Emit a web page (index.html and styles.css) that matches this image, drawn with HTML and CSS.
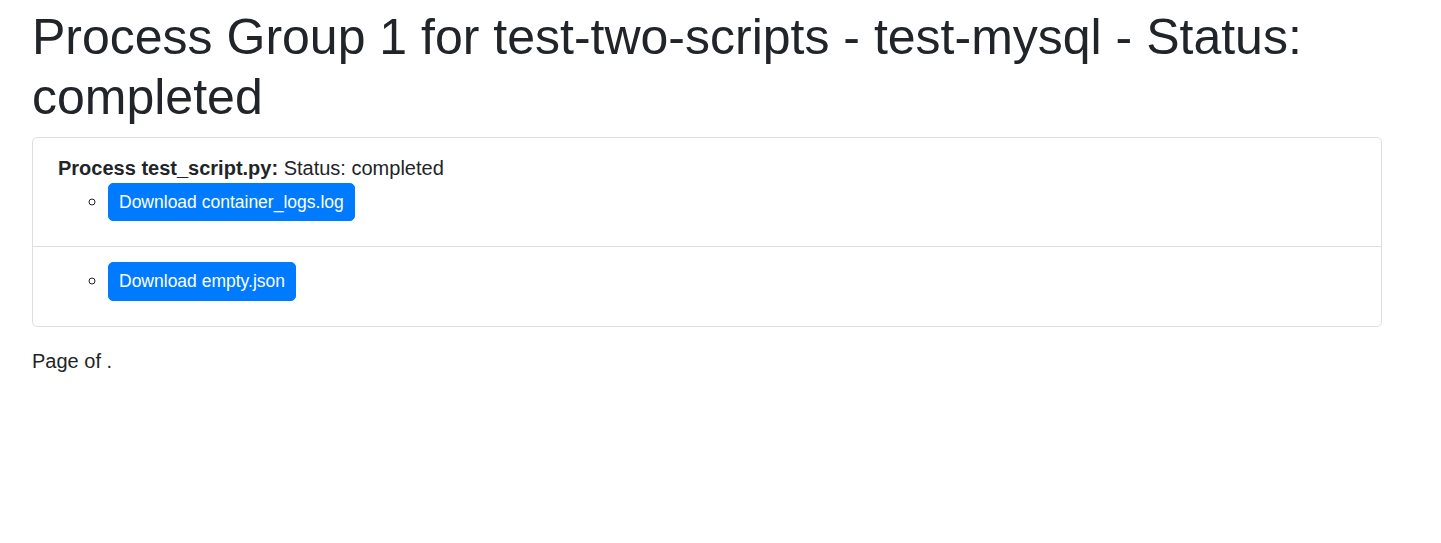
FILE: index.html
```html
<!DOCTYPE html>
<html lang="en">
<head>
  <meta charset="UTF-8">
  <title>Process Group 1</title>
  <link rel="stylesheet" href="styles.css">
</head>
<body>
  <div class="page">
    <h1>Process Group 1 for test-two-scripts - test-mysql - Status: completed</h1>

    <div class="card">
      <div class="card-item">
        <strong>Process test_script.py:</strong> Status: completed
        <ul class="files">
          <li><a class="btn" href="#">Download container_logs.log</a></li>
        </ul>
      </div>
      <div class="card-item">
        <ul class="files">
          <li><a class="btn" href="#">Download empty.json</a></li>
        </ul>
      </div>
    </div>

    <p class="pager">Page of .</p>
  </div>
</body>
</html>
```

FILE: styles.css
```css
body {
  margin: 0;
  font-family: "Liberation Sans", Arial, sans-serif;
  font-size: 20px;
  line-height: 1.5;
  color: #212529;
  background: #ffffff;
}
.page {
  padding: 7px 59px 0 32px;
}
h1 {
  margin: 0 0 10px;
  font-size: 50px;
  font-weight: 400;
  line-height: 1.2;
}
.card {
  border: 1px solid #dfdfdf;
  border-radius: 5px;
}
.card-item {
  padding: 15px 25px 25px;
}
.card-item + .card-item {
  border-top: 1px solid #dfdfdf;
}
.files {
  margin: 0;
  padding-left: 50px;
  list-style: circle;
}
.btn {
  display: inline-block;
  padding: 5px 10px;
  border: 1px solid #007bff;
  border-radius: 5px;
  background-color: #007bff;
  color: #ffffff;
  font-size: 17.5px;
  line-height: 1.5;
  text-decoration: none;
}
.pager {
  margin: 19px 0 0;
}
```
